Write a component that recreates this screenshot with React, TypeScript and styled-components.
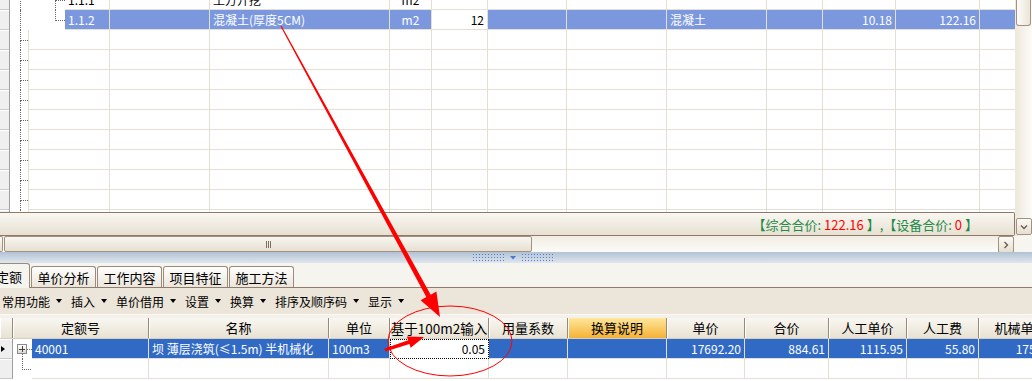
import React from 'react'
import styled, { createGlobalStyle } from 'styled-components'

const GlobalStyle = createGlobalStyle`
  html, body {
    margin: 0;
    padding: 0;
    background: #f5f3ee;
  }
  body {
    font-family: "Noto Sans CJK SC", "Liberation Sans", sans-serif;
    font-size: 12px;
    color: #000;
    overflow: hidden;
  }
`

const LINE = '#e3dfd4'
const DOT = '#666'

type Align = 'left' | 'center' | 'right'
type Tone = 'plain' | 'hi' | 'sel' | 'focus'

const Screen = styled.div`
  position: relative;
  width: 1032px;
  height: 381px;
  overflow: hidden;
  display: flex;
  flex-direction: column;
  background: #f5f3ee;
`

/* ---------- upper grid ---------- */

const UpperPane = styled.div`
  display: flex;
  height: 236px;
  flex: none;
`

const UpperMain = styled.div`
  flex: 1;
  min-width: 0;
  display: flex;
  flex-direction: column;
`

const Viewport = styled.div`
  height: 212px;
  flex: none;
  overflow: hidden;
  background: #fff;
`

// the grid is scrolled half a row down
const ScrolledRows = styled.div`
  margin-top: -10px;
`

const GridRow = styled.div`
  display: flex;
  height: 20px;
`

const RowHeader = styled.div<{ $w: number }>`
  width: ${(p) => p.$w}px;
  flex: none;
  box-sizing: border-box;
  display: flex;
  align-items: center;
  background: #efefef;
  border-right: 1px solid #9d9d9d;
  border-bottom: 1px solid #c9c9c9;
  box-shadow: inset 0 1px 0 #fff;
`

const Marker = styled.span`
  width: 0;
  height: 0;
  margin-left: 1px;
  border-top: 3px solid transparent;
  border-bottom: 3px solid transparent;
  border-left: 4px solid #000;
`

const Gutter = styled.div<{ $w: number }>`
  width: ${(p) => p.$w}px;
  flex: none;
  display: flex;
  background: #fff;
`

const Pad = styled.div<{ $w: number }>`
  width: ${(p) => p.$w}px;
  flex: none;
`

const Trunk = styled.div<{ $w: number }>`
  width: ${(p) => p.$w}px;
  flex: none;
  box-sizing: border-box;
  border-left: 1px dotted ${DOT};
`

const Branch = styled.div<{ $w: number; $last?: boolean }>`
  width: ${(p) => p.$w}px;
  flex: none;
  display: flex;
  flex-direction: column;

  &::before {
    content: '';
    height: 10px;
    border-left: 1px dotted ${DOT};
    border-bottom: 1px dotted ${DOT};
  }
  &::after {
    content: '';
    flex: 1;
    border-left: ${(p) => (p.$last ? '1px solid transparent' : `1px dotted ${DOT}`)};
  }
`

const toneBg: Record<Tone, string> = {
  plain: '#fff',
  hi: '#7b98df',
  sel: '#316ac5',
  focus: '#fff',
}

const Cell = styled.div<{ $w: number; $align?: Align; $tone?: Tone; $lead?: boolean }>`
  width: ${(p) => p.$w}px;
  flex: none;
  box-sizing: border-box;
  padding: 0 3px;
  border-right: 1px solid ${LINE};
  border-bottom: 1px solid ${LINE};
  border-left: ${(p) => (p.$lead ? `1px solid ${LINE}` : 'none')};
  line-height: 19px;
  white-space: nowrap;
  overflow: hidden;
  text-align: ${(p) => p.$align ?? 'left'};
  background: ${(p) => toneBg[p.$tone ?? 'plain']};
  color: ${(p) => (p.$tone === 'hi' || p.$tone === 'sel' ? '#fff' : '#000')};
  ${(p) =>
    p.$tone === 'focus' &&
    `
    border: 1px dotted #000;
    line-height: 17px;
  `}
`

const StatusBar = styled.div`
  height: 24px;
  flex: none;
  box-sizing: border-box;
  border: 1px solid #8e7a6a;
  border-left: none;
  border-radius: 0 2px 2px 0;
  background: linear-gradient(#f9f7f2, #e8e1d2);
  display: flex;
  align-items: center;
  justify-content: flex-end;
  padding-right: 36px;
  font-size: 13px;
  color: #1e8a47;
  white-space: pre;
`

const Money = styled.span`
  color: #ff0000;
`

const VScroll = styled.div`
  width: 17px;
  flex: none;
  box-sizing: border-box;
  display: flex;
  flex-direction: column;
  align-items: center;
  padding-bottom: 1px;
  background: linear-gradient(to right, #eee8dc, #fcfbf8);
`

const VThumb = styled.div`
  width: 15px;
  height: 26px;
  flex: none;
  box-sizing: border-box;
  border: 1px solid #a49182;
  border-top: none;
  border-radius: 0 0 3px 3px;
  background: linear-gradient(to right, #fdfcf9, #ebe5d8);
`

const Spacer = styled.div`
  flex: 1;
`

const ScrollButton = styled.div`
  width: 16px;
  height: 17px;
  flex: none;
  box-sizing: border-box;
  border: 1px solid #a49182;
  border-radius: 2px;
  background: linear-gradient(#fbfaf6, #e6dfd1);
  display: flex;
  align-items: center;
  justify-content: center;
`

const HScrollRow = styled.div`
  height: 16px;
  flex: none;
  display: flex;
`

const HTrack = styled.div`
  flex: 1;
  display: flex;
  gap: 1px;
  background: linear-gradient(#f2ede3, #fcfbf8);
`

const HStub = styled.div`
  width: 3px;
  flex: none;
  box-sizing: border-box;
  border: 1px solid #a49182;
  border-left: none;
  border-radius: 0 2px 2px 0;
  background: linear-gradient(#fbfaf6, #e6dfd1);
`

const HThumb = styled.div`
  width: 528px;
  flex: none;
  box-sizing: border-box;
  border: 1px solid #a49182;
  border-radius: 2px;
  background: linear-gradient(#f8f6f0, #e7e0d2);
  display: flex;
  align-items: center;
  justify-content: center;
`

const Grip = styled.div`
  width: 5px;
  height: 7px;
  background: repeating-linear-gradient(to right, #7f6f60 0 1px, transparent 1px 2px);
`

const Corner = styled.div`
  width: 18px;
  flex: none;
  background: #f7f5f0;
`

/* ---------- splitter, tabs, toolbar ---------- */

const Splitter = styled.div`
  height: 11px;
  flex: none;
  display: flex;
  align-items: center;
  justify-content: center;
  gap: 5px;
  padding-right: 6px;
  background: linear-gradient(#b2c2d3, #dfe6ee);
`

const SplitArrow = styled.span`
  width: 7px;
  height: 4px;
  background: #4a78d4;
  clip-path: polygon(0 0, 100% 0, 50% 100%);
`

const TabStrip = styled.div`
  height: 25px;
  flex: none;
  box-sizing: border-box;
  display: flex;
  align-items: flex-end;
  gap: 1px;
  background: #f5f4ef;
  border-bottom: 1px solid #8f7c6c;
`

const Tab = styled.div<{ $active?: boolean }>`
  width: ${(p) => (p.$active ? 42 : 65)}px;
  height: ${(p) => (p.$active ? 25 : 21)}px;
  margin-bottom: ${(p) => (p.$active ? -1 : 0)}px;
  margin-left: ${(p) => (p.$active ? -12 : 0)}px;
  flex: none;
  box-sizing: border-box;
  border: 1px solid #9c8b7b;
  border-bottom: none;
  border-radius: 3px 3px 0 0;
  background: ${(p) => (p.$active ? '#f5f4ef' : 'linear-gradient(#fefefd, #ebe6dc)')};
  display: flex;
  align-items: center;
  justify-content: center;
  padding-top: ${(p) => (p.$active ? 1 : 0)}px;
  font-size: 13px;
`

const Toolbar = styled.div`
  height: 26px;
  flex: none;
  box-sizing: border-box;
  display: flex;
  align-items: center;
  gap: 9px;
  padding-left: 2px;
  background: #ece5d9;
`

const ToolItem = styled.div`
  display: flex;
  align-items: center;
  gap: 6px;
  font-size: 12px;
`

const Caret = styled.span`
  width: 6px;
  height: 4px;
  background: #000;
  clip-path: polygon(0 0, 100% 0, 50% 100%);
`

/* ---------- lower grid ---------- */

const LowerGrid = styled.div`
  flex: 1;
  display: flex;
  flex-direction: column;
  box-sizing: border-box;
  padding-top: 3px;
  border-top: 1px solid #fbf9f4;
  background: #f4f1ea;
`

const HeaderRow = styled.div`
  display: flex;
  height: 21px;
  flex: none;
  box-sizing: border-box;
  border-bottom: 1px solid #d6cfc1;
`

const HeaderCell = styled.div<{ $w: number; $hot?: boolean; $big?: boolean }>`
  width: ${(p) => p.$w}px;
  flex: none;
  box-sizing: border-box;
  border-right: 1px solid #9b8878;
  box-shadow: inset 1px 0 0 #fff;
  background: ${(p) =>
    p.$hot ? 'linear-gradient(#ffe79c, #f5b136)' : 'linear-gradient(#f9f7f1, #e8e2d3)'};
  text-align: center;
  line-height: 20px;
  font-size: ${(p) => (p.$big ? 13.5 : 13)}px;
  white-space: nowrap;
  overflow: hidden;
`

const LowerBody = styled.div`
  flex: 1;
  background: #fff;
`

const LowerGutter = styled.div`
  width: 19px;
  flex: none;
  box-sizing: border-box;
  display: flex;
  flex-direction: column;
  padding: 5px 0 0 4px;
  background: #fff;
`

const ExpandRow = styled.div`
  display: flex;
  align-items: center;
`

const ExpandBox = styled.div`
  width: 10px;
  height: 10px;
  box-sizing: border-box;
  border: 1px solid #8c8c8c;
  background: linear-gradient(#fff, #dcd8cc);
  display: grid;
  place-items: center;

  &::before,
  &::after {
    content: '';
    grid-area: 1 / 1;
    background: #444;
  }
  &::before {
    width: 6px;
    height: 1px;
  }
  &::after {
    width: 1px;
    height: 6px;
  }
`

const Stub = styled.div`
  width: 5px;
  border-top: 1px dotted ${DOT};
`

const LowerTrunk = styled.div`
  flex: 1;
  margin-left: 5px;
  border-left: 1px dotted ${DOT};
`

const Overlay = styled.svg`
  position: absolute;
  left: 0;
  top: 0;
  pointer-events: none;
`

/* ---------- data ---------- */

const upperCols = [100, 180, 42, 56, 79, 100, 100, 56, 73, 84, 40]
const upperAlign: Align[] = ['left', 'left', 'center', 'right', 'left', 'left', 'left', 'left', 'right', 'right', 'left']

type UpperRow = { level: 1 | 2; code: string; cells: string[]; hi?: boolean; last?: boolean }

const emptyCells = upperCols.map(() => '')
const upperRows: UpperRow[] = [
  { level: 2, code: '1.1.1', cells: ['', '土方开挖', 'm2', '', '', '', '', '', '', '', ''] },
  {
    level: 2,
    code: '1.1.2',
    hi: true,
    last: true,
    cells: ['', '混凝土(厚度5CM)', 'm2', '12', '', '', '混凝土', '', '10.18', '122.16', ''],
  },
  ...Array.from({ length: 10 }, () => ({ level: 1 as const, code: '', cells: emptyCells })),
]

const lowerHeads = [
  { title: '定额号', w: 136 },
  { title: '名称', w: 180 },
  { title: '单位', w: 61 },
  { title: '基于100m2输入', w: 99, big: true },
  { title: '用量系数', w: 79 },
  { title: '换算说明', w: 99, hot: true },
  { title: '单价', w: 78 },
  { title: '合价', w: 84 },
  { title: '人工单价', w: 78 },
  { title: '人工费', w: 72 },
  { title: '机械单价', w: 84 },
]

const lowerCols = [180, 61, 99, 79, 99, 78, 84, 78, 72, 84]
const lowerAlign: Align[] = ['left', 'left', 'right', 'left', 'left', 'right', 'right', 'right', 'right', 'right']
const lowerData = ['坝 薄层浇筑(≤1.5m) 半机械化', '100m3', '0.05', '', '', '17692.20', '884.61', '1115.95', '55.80', '1757.25']

const tools = ['常用功能', '插入', '单价借用', '设置', '换算', '排序及顺序码', '显示']
const tabs = ['定额', '单价分析', '工作内容', '项目特征', '施工方法']

const Chevron: React.FC<{ dir: 'down' | 'right' }> = ({ dir }) => (
  <svg width="8" height="8" viewBox="0 0 8 8">
    <path
      d={dir === 'down' ? 'M1 2.5 L4 5.5 L7 2.5' : 'M2.5 1 L5.5 4 L2.5 7'}
      fill="none"
      stroke="#6b5849"
      strokeWidth="1.3"
    />
  </svg>
)

const GripDots: React.FC<{ id: string }> = ({ id }) => (
  <svg width="32" height="7" viewBox="0 0 32 7">
    <defs>
      <pattern id={id} width="3" height="3" patternUnits="userSpaceOnUse">
        <rect width="1" height="1" fill="#4f7ed8" />
      </pattern>
    </defs>
    <rect width="32" height="7" fill={`url(#${id})`} />
  </svg>
)

const TreeLines: React.FC<{ level: 1 | 2; last?: boolean }> = ({ level, last }) =>
  level === 1 ? (
    <Gutter $w={18}>
      <Pad $w={10} />
      <Branch $w={8} />
    </Gutter>
  ) : (
    <Gutter $w={55}>
      <Pad $w={10} />
      <Trunk $w={35} />
      <Branch $w={10} $last={last} />
    </Gutter>
  )

const App: React.FC = () => {
  return (
    <Screen>
      <GlobalStyle />
      <UpperPane>
        <UpperMain>
          <Viewport>
            <ScrolledRows>
              {upperRows.map((row, i) => (
                <GridRow key={i}>
                  <RowHeader $w={10} />
                  <TreeLines level={row.level} last={row.last} />
                  <Cell $w={row.level === 1 ? 82 : 45} $lead={row.level === 1} $tone={row.hi ? 'hi' : 'plain'}>
                    {row.code}
                  </Cell>
                  {row.cells.map((text, c) => (
                    <Cell
                      key={c}
                      $w={upperCols[c]}
                      $align={upperAlign[c]}
                      $tone={row.hi && c !== 3 ? 'hi' : 'plain'}
                    >
                      {text}
                    </Cell>
                  ))}
                </GridRow>
              ))}
            </ScrolledRows>
          </Viewport>
          <StatusBar>
            【综合合价: <Money>122.16</Money> 】,【设备合价: <Money>0</Money> 】
          </StatusBar>
        </UpperMain>
        <VScroll>
          <VThumb />
          <Spacer />
          <ScrollButton>
            <Chevron dir="down" />
          </ScrollButton>
        </VScroll>
      </UpperPane>

      <HScrollRow>
        <HTrack>
          <HStub />
          <HThumb>
            <Grip />
          </HThumb>
          <Spacer />
          <ScrollButton>
            <Chevron dir="right" />
          </ScrollButton>
        </HTrack>
        <Corner />
      </HScrollRow>

      <Splitter>
        <GripDots id="dots-a" />
        <SplitArrow />
        <GripDots id="dots-b" />
      </Splitter>

      <TabStrip>
        {tabs.map((t, i) => (
          <Tab key={t} $active={i === 0}>
            {t}
          </Tab>
        ))}
      </TabStrip>

      <Toolbar>
        {tools.map((t) => (
          <ToolItem key={t}>
            {t}
            <Caret />
          </ToolItem>
        ))}
      </Toolbar>

      <LowerGrid>
        <HeaderRow>
          <HeaderCell $w={13} />
          {lowerHeads.map((h) => (
            <HeaderCell key={h.title} $w={h.w} $hot={h.hot} $big={h.big}>
              {h.title}
            </HeaderCell>
          ))}
        </HeaderRow>
        <LowerBody>
          <GridRow>
            <RowHeader $w={13}>
              <Marker />
            </RowHeader>
            <LowerGutter>
              <ExpandRow>
                <ExpandBox />
                <Stub />
              </ExpandRow>
              <LowerTrunk />
            </LowerGutter>
            <Cell $w={117} $tone="sel">
              40001
            </Cell>
            {lowerData.map((text, c) => (
              <Cell key={c} $w={lowerCols[c]} $align={lowerAlign[c]} $tone={c === 2 ? 'focus' : 'sel'}>
                {text}
              </Cell>
            ))}
          </GridRow>
          <GridRow>
            <RowHeader $w={13} />
            <Gutter $w={19}>
              <Pad $w={9} />
              <Branch $w={9} $last />
            </Gutter>
            <Cell $w={117} />
            {lowerCols.map((w, c) => (
              <Cell key={c} $w={w} />
            ))}
          </GridRow>
        </LowerBody>
      </LowerGrid>

      <Overlay width="1032" height="381" viewBox="0 0 1032 381">
        <polygon
          points="280.5,26.3 426.3,297.1 420.6,300.3 440,317 436.4,291.6 430.7,294.7 281.5,25.7"
          fill="#ff0000"
        />
        <polygon
          points="385.5,351.4 409.4,344 410.7,347.8 424,337 406.9,336.4 408.2,340.2 384.5,348.6"
          fill="#ff0000"
        />
        <ellipse cx="450" cy="341" rx="62" ry="35" fill="none" stroke="#ff0000" strokeWidth="1" />
      </Overlay>
    </Screen>
  )
}

export default App
